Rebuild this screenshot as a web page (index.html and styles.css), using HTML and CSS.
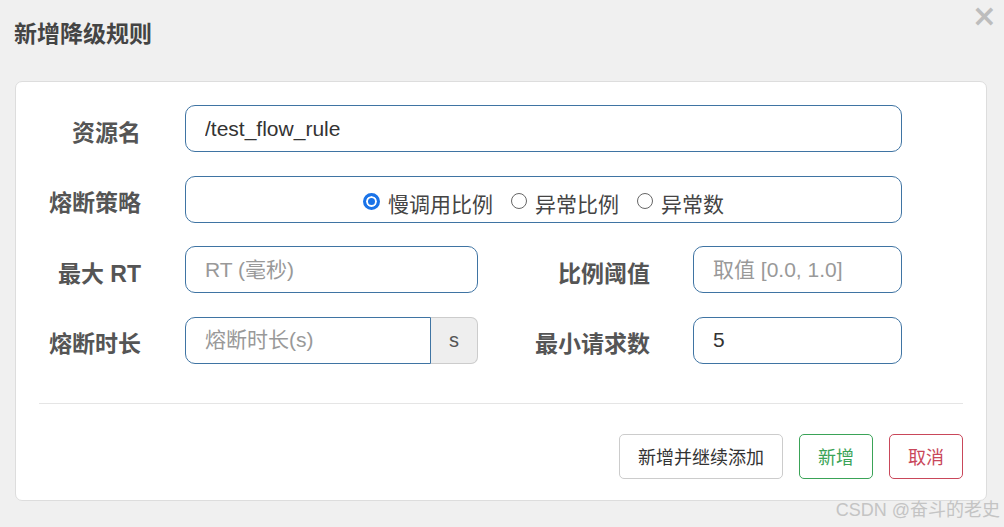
FILE: index.html
```html
<!DOCTYPE html>
<html lang="zh-CN">
<head>
  <meta charset="UTF-8">
  <title>新增降级规则</title>
  <link rel="stylesheet" href="styles.css">
</head>
<body>
  <div class="dialog">
    <!-- En-tête -->
    <div class="dialog-head">
      <h3>新增降级规则</h3>
      <span class="close">&times;</span>
    </div>

    <div class="card">
      <div class="row">
        <label class="label">资源名</label>
        <input class="field wide" type="text" value="/test_flow_rule">
      </div>

      <div class="row">
        <label class="label">熔断策略</label>
        <div class="field wide radios">
          <label class="radio"><span class="dot checked"></span>慢调用比例</label>
          <label class="radio"><span class="dot"></span>异常比例</label>
          <label class="radio"><span class="dot"></span>异常数</label>
        </div>
      </div>

      <div class="row">
        <label class="label">最大 RT</label>
        <input class="field half" type="text" placeholder="RT (毫秒)">
        <label class="label right">比例阈值</label>
        <input class="field small" type="text" placeholder="取值 [0.0, 1.0]">
      </div>

      <div class="row">
        <label class="label">熔断时长</label>
        <div class="group">
          <input class="field grouped" type="text" placeholder="熔断时长(s)">
          <span class="addon">s</span>
        </div>
        <label class="label right">最小请求数</label>
        <input class="field small" type="text" value="5">
      </div>

      <hr class="sep">

      <div class="actions">
        <button class="btn">新增并继续添加</button>
        <button class="btn green">新增</button>
        <button class="btn red">取消</button>
      </div>
    </div>
  </div>

  <div class="mark">CSDN @奋斗的老史</div>
</body>
</html>
```

FILE: styles.css
```css
body {
  margin: 0;
  background: #f0f0f0;
  font-family: "Liberation Sans", "Noto Sans CJK SC", sans-serif;
  color: #333;
  height: 527px;
  overflow: hidden;
  position: relative;
}

.dialog {
  padding: 0 17px 0 15px;
}

.dialog-head {
  display: flex;
  justify-content: space-between;
  align-items: flex-start;
  height: 81px;
}

.dialog-head h3 {
  margin: 16px 0 0 -1px;
  font-family: "Noto Sans CJK SC", sans-serif;
  font-size: 23px;
  line-height: 32px;
  font-weight: bold;
  color: #444;
}

.close {
  font-family: "DejaVu Sans", sans-serif;
  font-size: 30px;
  line-height: 30px;
  font-weight: bold;
  color: #bdbdbd;
  margin: 1px -10px 0 0;
}

.card {
  background: #fff;
  border: 1px solid #ddd;
  border-radius: 7px;
  height: 420px;
  box-sizing: border-box;
  padding: 23px 23px 0 23px;
}

.row {
  display: flex;
  align-items: center;
  height: 47px;
  margin-bottom: 23.5px;
}

.label {
  width: 102px;
  text-align: right;
  font-family: "Liberation Sans", "Noto Sans CJK SC", sans-serif;
  font-size: 23px;
  font-weight: bold;
  color: #555;
  padding-top: 4px;
  margin-right: 44px;
}

.label.right {
  width: 172px;
  margin-right: 43px;
}

.field {
  box-sizing: border-box;
  height: 47px;
  border: 1px solid #3f74a3;
  border-radius: 10px;
  background: #fff;
  font-family: "Liberation Sans", "Noto Sans CJK SC", sans-serif;
  font-size: 21px;
  color: #333;
  padding: 0 19px;
  outline: none;
}

.field::placeholder {
  color: #999;
}

.wide {
  width: 717px;
}

.half {
  width: 293px;
}

.small {
  width: 209px;
}

.radios {
  display: flex;
  justify-content: center;
  align-items: center;
  gap: 18px;
  padding: 7px 0 0 0;
}

.radio {
  display: flex;
  align-items: center;
  color: #444;
  font-family: "Noto Sans CJK SC", sans-serif;
  font-size: 21px;
}

.dot {
  width: 16px;
  height: 16px;
  border: 1px solid #666;
  border-radius: 50%;
  margin-right: 8px;
  margin-top: -3px;
  box-sizing: border-box;
}

.dot.checked {
  width: 17px;
  height: 17px;
  border: 3px solid #1a73e8;
  background: #1a73e8;
  box-shadow: inset 0 0 0 2px #fff;
}

.group {
  display: flex;
  width: 293px;
}

.grouped {
  width: 246px;
  border-radius: 10px 0 0 10px;
}

.addon {
  flex: 1;
  height: 47px;
  box-sizing: border-box;
  background: #eee;
  border: 1px solid #ccc;
  border-left: none;
  border-radius: 0 7px 7px 0;
  display: flex;
  align-items: center;
  justify-content: center;
  font-size: 20px;
  color: #555;
}

.sep {
  border: none;
  border-top: 1px solid #e5e5e5;
  margin: 39px 0 30px 0;
}

.actions {
  display: flex;
  justify-content: flex-end;
  gap: 16px;
}

.btn {
  height: 45px;
  box-sizing: border-box;
  padding: 0 18px;
  background: #fff;
  border: 1px solid #ccc;
  border-radius: 5px;
  font-family: "Noto Sans CJK SC", sans-serif;
  font-size: 18px;
  color: #333;
}

.btn.green {
  border-color: #3aa357;
  color: #3aa357;
}

.btn.red {
  border-color: #c9475a;
  color: #c9475a;
}

.mark {
  position: absolute;
  right: 4px;
  bottom: 6px;
  font-family: "Liberation Sans", "Noto Sans CJK SC", sans-serif;
  font-size: 18px;
  color: #c4c4c4;
}
```
